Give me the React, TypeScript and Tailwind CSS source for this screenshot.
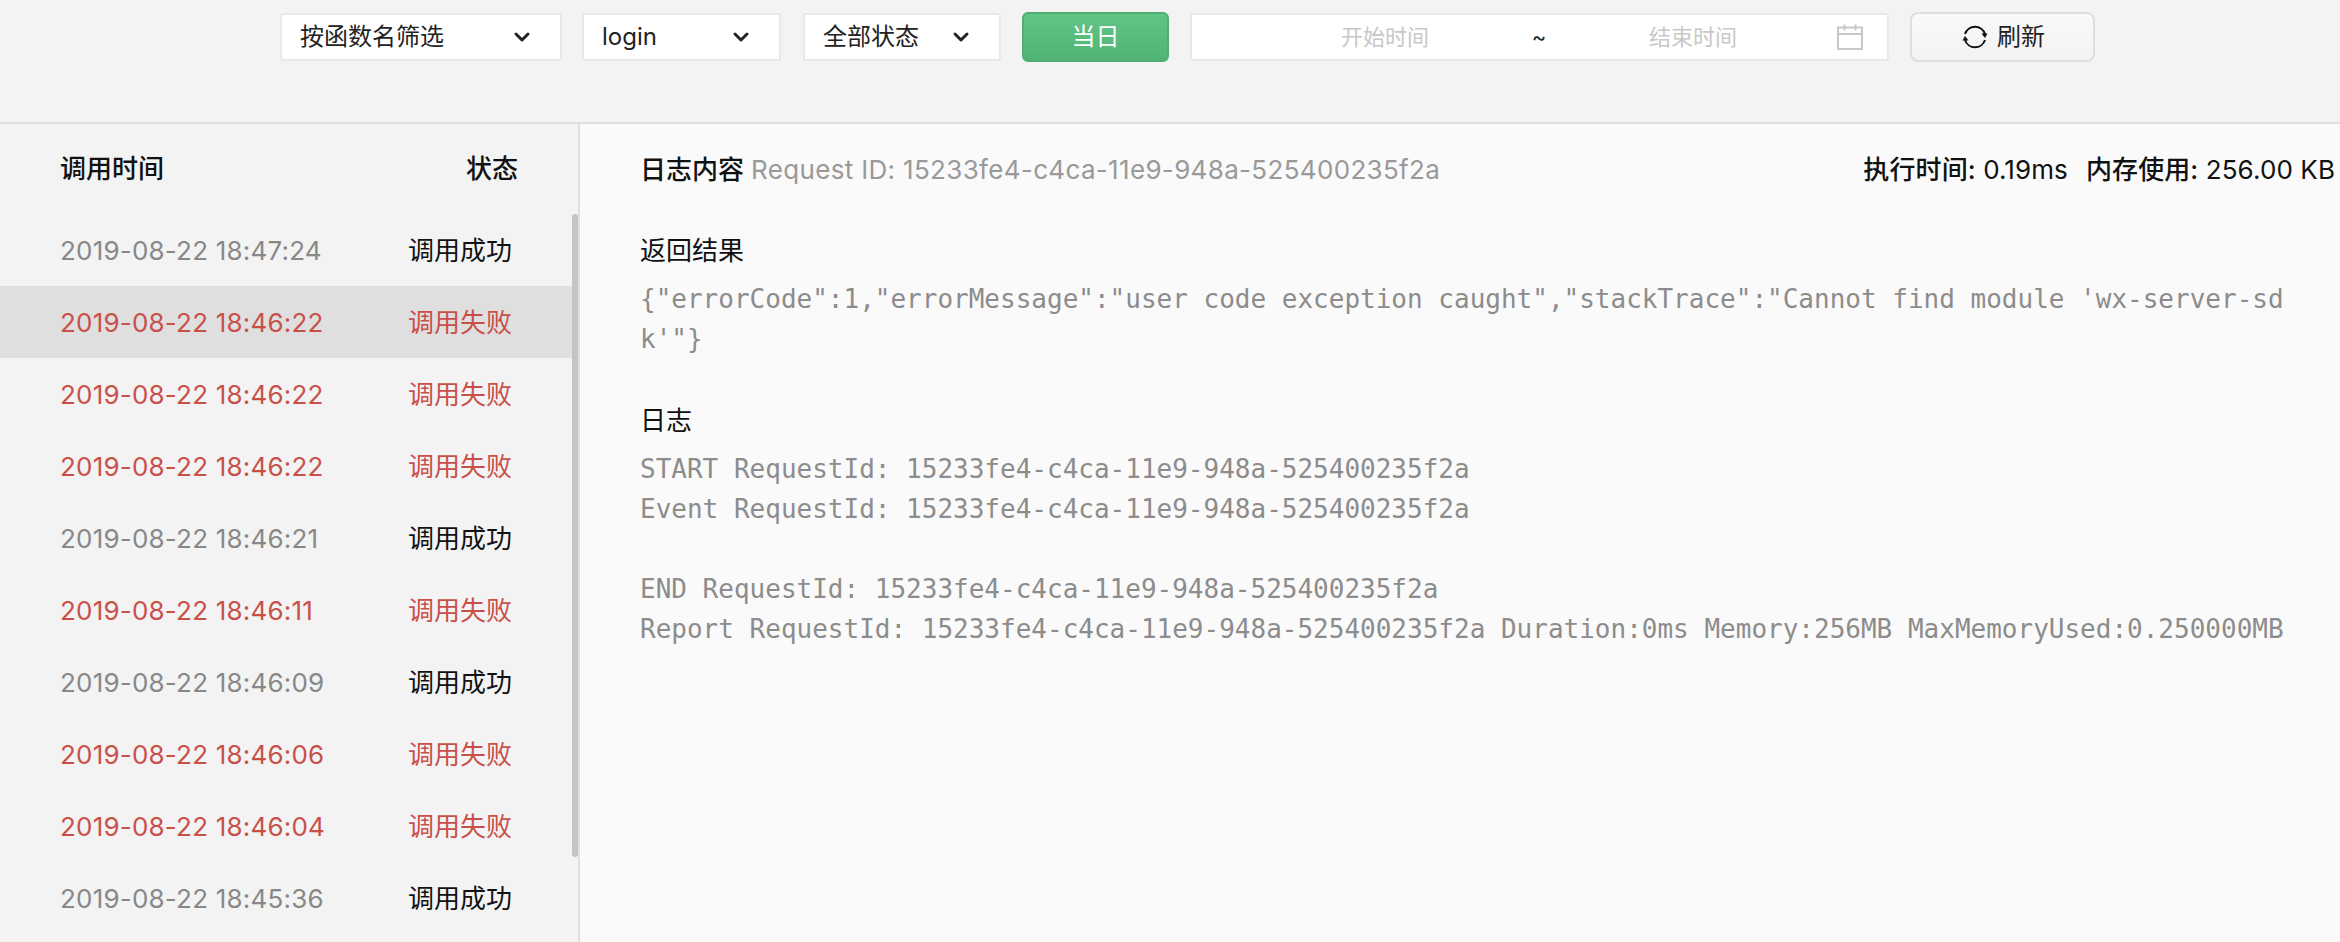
import React from "react";
import { ChevronDown } from "lucide-react";

type LogRow = { time: string; ok: boolean; active?: boolean };

const ROWS: LogRow[] = [
  { time: "2019-08-22 18:47:24", ok: true },
  { time: "2019-08-22 18:46:22", ok: false, active: true },
  { time: "2019-08-22 18:46:22", ok: false },
  { time: "2019-08-22 18:46:22", ok: false },
  { time: "2019-08-22 18:46:21", ok: true },
  { time: "2019-08-22 18:46:11", ok: false },
  { time: "2019-08-22 18:46:09", ok: true },
  { time: "2019-08-22 18:46:06", ok: false },
  { time: "2019-08-22 18:46:04", ok: false },
  { time: "2019-08-22 18:45:36", ok: true },
];

function Select({ label, width }: { label: string; width: string }) {
  return (
    <div className={`${width} mt-px flex h-[48px] items-center justify-between rounded-[3px] border-2 border-[#e8e8e8] bg-white pl-[18px] pr-[26px] text-[24px] text-[#222]`}>
      <span>{label}</span>
      <ChevronDown size={24} strokeWidth={3} className="text-[#222]" />
    </div>
  );
}

function RefreshIcon() {
  return (
    <svg width="26" height="26" viewBox="0 0 26 26" fill="none" stroke="#111" strokeWidth="2">
      <path d="M3 10A10.5 10.5 0 0 1 23 10" />
      <path d="M23 16A10.5 10.5 0 0 1 3 16" />
      <path d="M19.5 9.5H25.5L23 14Z" fill="#111" stroke="none" />
      <path d="M6.5 16.5H0.5L3 12Z" fill="#111" stroke="none" />
    </svg>
  );
}

function CalendarIcon() {
  return (
    <svg width="26" height="26" viewBox="0 0 26 26" fill="none" stroke="#c8c8c8" strokeWidth="2" className="ml-[100px]">
      <rect x="1" y="3.5" width="24" height="21.5" />
      <path d="M1 10H25" />
      <path d="M7.5 0.5V6.5M18.5 0.5V6.5" />
    </svg>
  );
}

export default function App() {
  return (
    <div className="flex h-[942px] w-[2340px] flex-col overflow-hidden bg-[#f3f3f3] font-['Inter','Noto_Sans_CJK_SC',sans-serif]">
      <header className="flex h-[124px] shrink-0 items-start gap-[21px] border-b-2 border-[#e0e0e0] pl-[280px] pt-[12px]">
        <Select label="按函数名筛选" width="w-[282px]" />
        <Select label="login" width="-ml-px mr-px w-[199px]" />
        <Select label="全部状态" width="w-[198px]" />
        <button
          type="button"
          className="h-[50px] w-[147px] rounded-[6px] border-2 border-[#4fae70] bg-linear-to-b from-[#5fc585] to-[#52b474] text-[24px] text-white"
        >
          当日
        </button>
        <div className="mt-px flex h-[48px] w-[699px] items-center rounded-[3px] border-2 border-[#e8e8e8] bg-white text-[22px]">
          <span className="ml-[149px] w-[88px] text-[#c8c8c8]">开始时间</span>
          <span className="ml-[100px] w-[20px] text-center text-[#222]">~</span>
          <span className="ml-[100px] w-[88px] text-[#c8c8c8]">结束时间</span>
          <CalendarIcon />
        </div>
        <button
          type="button"
          className="flex h-[50px] w-[185px] items-center justify-center gap-[9px] rounded-[8px] border-2 border-[#dedede] bg-linear-to-b from-[#f9f9f9] to-[#f3f3f3] pl-[2px] text-[24px] text-[#222]"
        >
          <RefreshIcon />
          刷新
        </button>
      </header>

      <div className="flex min-h-0 flex-1">
        <aside className="flex w-[580px] shrink-0 flex-col border-r-2 border-[#e0e0e0]">
          <div className="flex h-[90px] shrink-0 items-center justify-between px-[60px] text-[26px] font-medium leading-none text-[#111]">
            <span>调用时间</span>
            <span>状态</span>
          </div>
          <div className="relative min-h-0 flex-1 overflow-hidden">
            {ROWS.map((row, i) => (
              <div
                key={i}
                className={`flex h-[72px] w-[572px] items-center pl-[60px] text-[26px] ${row.active ? "bg-[#dfdfdf]" : ""} ${row.ok ? "text-[#888]" : "text-[#c9504a]"}`}
              >
                <span className="w-[348px] tracking-[0.2px]">{row.time}</span>
                <span className={row.ok ? "text-[#111]" : ""}>{row.ok ? "调用成功" : "调用失败"}</span>
              </div>
            ))}
            <div className="absolute right-0 top-0 h-[643px] w-[6px] rounded-[3px] bg-[#c4c4c4]" />
          </div>
        </aside>

        <main className="min-w-0 flex-1 bg-[#fafafa] pl-[60px] text-[26px]">
          <div className="flex h-[90px] items-center justify-between pr-[5px]">
            <div>
              <span className="font-medium text-[#111]">日志内容</span>
              <span className="ml-[7px] tracking-[0.33px] text-[#999]">Request ID: 15233fe4-c4ca-11e9-948a-525400235f2a</span>
            </div>
            <div className="tracking-[0.1px] text-[#111]">
              <span className="font-medium">执行时间:</span> 0.19ms
              <span className="ml-[18px] font-medium">内存使用:</span> 256.00 KB
            </div>
          </div>

          <h3 className="mt-[17px] text-[#111]">返回结果</h3>
          <pre className="mt-[9px] w-[1652px] whitespace-pre-wrap break-all font-['DejaVu_Sans_Mono',monospace] text-[26px] leading-[40px] text-[#8c8c8c]">
            {`{"errorCode":1,"errorMessage":"user code exception caught","stackTrace":"Cannot find module 'wx-server-sdk'"}`}
          </pre>

          <h3 className="mt-[42px] text-[#111]">日志</h3>
          <pre className="mt-[9px] font-['DejaVu_Sans_Mono',monospace] text-[26px] leading-[40px] text-[#8c8c8c]">
            {`START RequestId: 15233fe4-c4ca-11e9-948a-525400235f2a
Event RequestId: 15233fe4-c4ca-11e9-948a-525400235f2a

END RequestId: 15233fe4-c4ca-11e9-948a-525400235f2a
Report RequestId: 15233fe4-c4ca-11e9-948a-525400235f2a Duration:0ms Memory:256MB MaxMemoryUsed:0.250000MB`}
          </pre>
        </main>
      </div>
    </div>
  );
}
